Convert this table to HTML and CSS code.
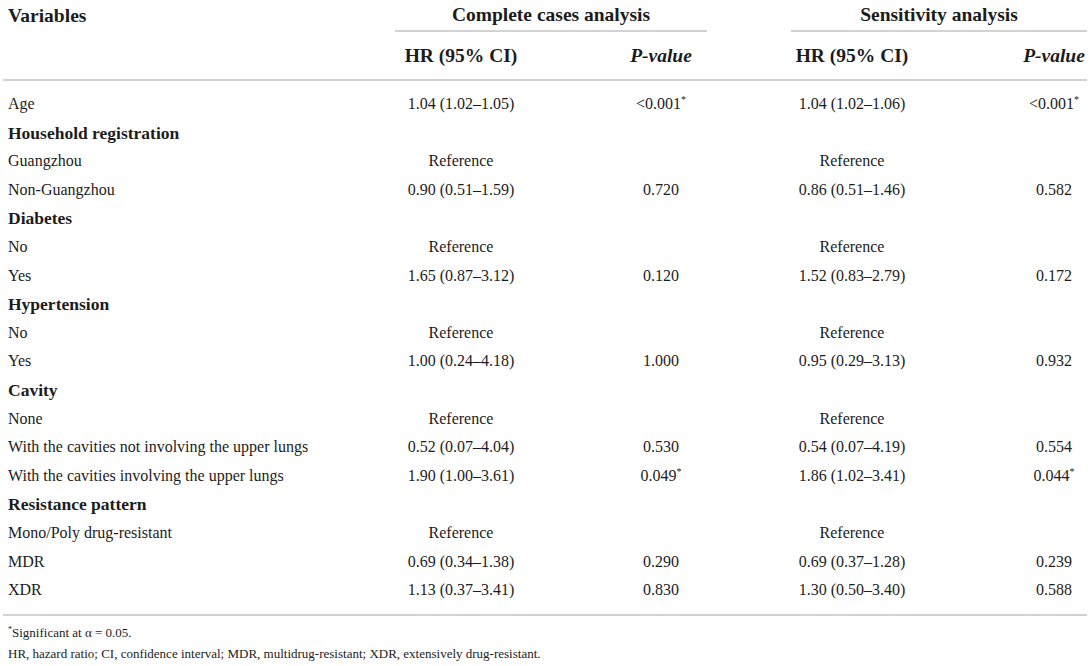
FILE: index.html
```html
<!DOCTYPE html>
<html>
<head>
  <title>Cox regression</title>
  <link rel="stylesheet" href="styles.css">
</head>
<body>
  <table class="tbl">
    <colgroup>
      <col class="c-var">
      <col class="c-hr">
      <col class="c-p">
      <col class="c-gap">
      <col class="c-hr2">
      <col class="c-p2">
    </colgroup>
    <thead>
      <tr class="h1">
        <th class="var">Variables</th>
        <th colspan="2" class="group">Complete cases analysis</th>
        <th></th>
        <th colspan="2" class="group">Sensitivity analysis</th>
      </tr>
      <tr class="h2">
        <th></th>
        <th class="hr">HR (95% CI)</th>
        <th class="p"><i>P-value</i></th>
        <th></th>
        <th class="hr">HR (95% CI)</th>
        <th class="p p2"><i>P-value</i></th>
      </tr>
    </thead>
    <tbody>
      <tr class="first"><td>Age</td><td class="hr">1.04 (1.02–1.05)</td><td class="p">&lt;0.001<sup>*</sup></td><td></td><td class="hr">1.04 (1.02–1.06)</td><td class="p p2">&lt;0.001<sup>*</sup></td></tr>
      <tr><td class="sec" colspan="6">Household registration</td></tr>
      <tr><td>Guangzhou</td><td class="hr">Reference</td><td></td><td></td><td class="hr">Reference</td><td></td></tr>
      <tr><td>Non-Guangzhou</td><td class="hr">0.90 (0.51–1.59)</td><td class="p">0.720</td><td></td><td class="hr">0.86 (0.51–1.46)</td><td class="p p2">0.582</td></tr>
      <tr><td class="sec" colspan="6">Diabetes</td></tr>
      <tr><td>No</td><td class="hr">Reference</td><td></td><td></td><td class="hr">Reference</td><td></td></tr>
      <tr><td>Yes</td><td class="hr">1.65 (0.87–3.12)</td><td class="p">0.120</td><td></td><td class="hr">1.52 (0.83–2.79)</td><td class="p p2">0.172</td></tr>
      <tr><td class="sec" colspan="6">Hypertension</td></tr>
      <tr><td>No</td><td class="hr">Reference</td><td></td><td></td><td class="hr">Reference</td><td></td></tr>
      <tr><td>Yes</td><td class="hr">1.00 (0.24–4.18)</td><td class="p">1.000</td><td></td><td class="hr">0.95 (0.29–3.13)</td><td class="p p2">0.932</td></tr>
      <tr><td class="sec" colspan="6">Cavity</td></tr>
      <tr><td>None</td><td class="hr">Reference</td><td></td><td></td><td class="hr">Reference</td><td></td></tr>
      <tr><td>With the cavities not involving the upper lungs</td><td class="hr">0.52 (0.07–4.04)</td><td class="p">0.530</td><td></td><td class="hr">0.54 (0.07–4.19)</td><td class="p p2">0.554</td></tr>
      <tr><td>With the cavities involving the upper lungs</td><td class="hr">1.90 (1.00–3.61)</td><td class="p">0.049<sup>*</sup></td><td></td><td class="hr">1.86 (1.02–3.41)</td><td class="p p2">0.044<sup>*</sup></td></tr>
      <tr><td class="sec" colspan="6">Resistance pattern</td></tr>
      <tr><td>Mono/Poly drug-resistant</td><td class="hr">Reference</td><td></td><td></td><td class="hr">Reference</td><td></td></tr>
      <tr><td>MDR</td><td class="hr">0.69 (0.34–1.38)</td><td class="p">0.290</td><td></td><td class="hr">0.69 (0.37–1.28)</td><td class="p p2">0.239</td></tr>
      <tr class="last"><td>XDR</td><td class="hr">1.13 (0.37–3.41)</td><td class="p">0.830</td><td></td><td class="hr">1.30 (0.50–3.40)</td><td class="p p2">0.588</td></tr>
    </tbody>
  </table>
  <div class="notes">
    <p><sup>*</sup>Significant at α = 0.05.</p>
    <p>HR, hazard ratio; CI, confidence interval; MDR, multidrug-resistant; XDR, extensively drug-resistant.</p>
  </div>
</body>
</html>
```

FILE: styles.css
```css
* {
  margin: 0;
  padding: 0;
}
body {
  background: #fff;
  color: #1c1c1c;
  font-family: "Liberation Serif", "Times New Roman", serif;
  font-size: 16px;
  padding: 0 4px 0 3px;
}
.tbl {
  width: 1084px;
  table-layout: fixed;
  border-collapse: collapse;
}
.c-var { width: 392px; }
.c-hr { width: 132px; }
.c-p { width: 180px; }
.c-gap { width: 84px; }
.c-hr2 { width: 122px; }
.c-p2 { width: 174px; }

th {
  font-weight: bold;
  font-size: 19.5px;
  padding: 0 5px;
  white-space: nowrap;
}
.h1 th {
  height: 30px;
  vertical-align: middle;
}
.h1 .var {
  text-align: left;
}
.h1 .group {
  border-bottom: 2px solid #d2d2d2;
  text-align: center;
}
.h2 th {
  height: 47px;
  border-bottom: 2px solid #d2d2d2;
}
.hr {
  text-align: center;
  padding-left: 0;
  padding-right: 0;
}
th.p, td.p {
  text-align: center;
  padding-left: 92px;
  padding-right: 4px;
}
th.p2, td.p2 {
  padding-left: 110px;
  padding-right: 2px;
}
td {
  padding: 4px 5px;
  line-height: 20.6px;
  white-space: nowrap;
}
td.sec {
  font-weight: bold;
  font-size: 17.5px;
}
sup {
  font-size: 10px;
  line-height: 0;
  vertical-align: 6px;
}
tr.first td {
  padding-top: 13px;
}
tr.last td {
  padding-bottom: 13px;
  border-bottom: 2px solid #d2d2d2;
}
.notes {
  padding: 6px 5px 0;
  font-size: 13px;
  line-height: 21px;
}
.notes sup {
  font-size: 8px;
  vertical-align: 5px;
}
```
